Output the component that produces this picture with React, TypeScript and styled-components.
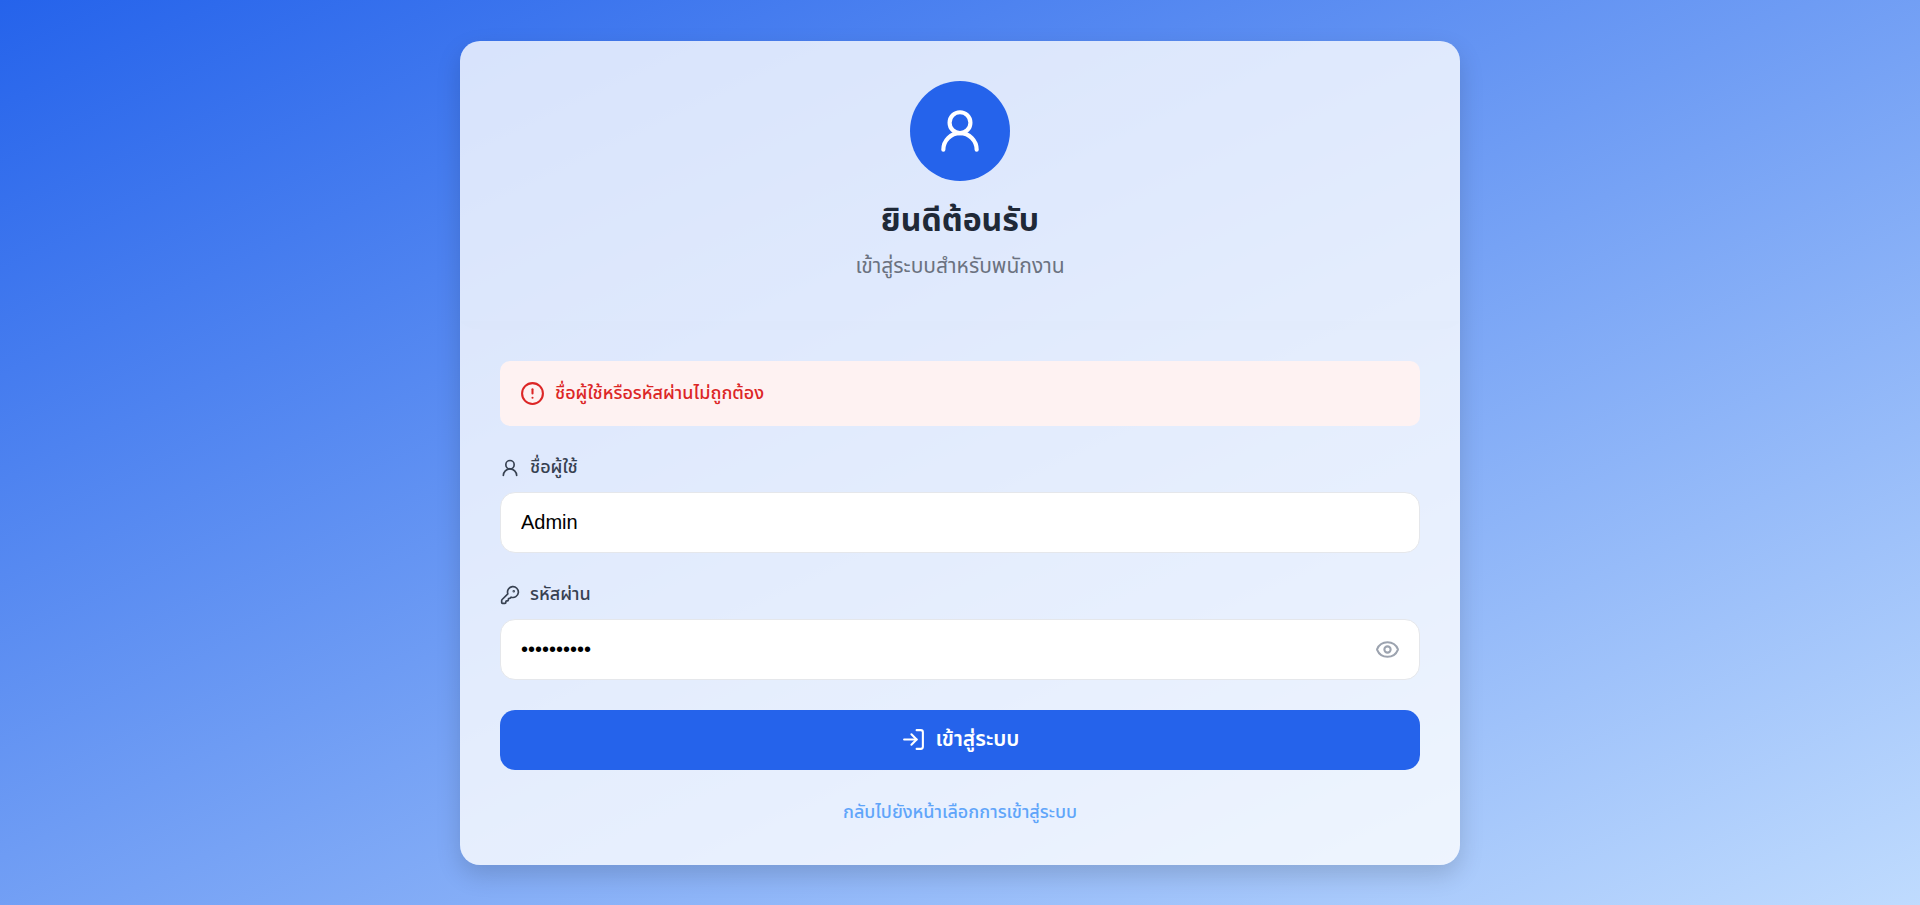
import { useState } from "react";
import styled, { createGlobalStyle } from "styled-components";
import { CircleAlert, Eye, EyeOff, KeyRound, LogIn, UserRound } from "lucide-react";

const GlobalStyle = createGlobalStyle`
  * { box-sizing: border-box; }
  body { margin: 0; }
  body, button, input {
    font-family: Tahoma, "Noto Sans Thai", "Noto Sans", sans-serif;
  }
`;

const Page = styled.main`
  min-height: 100vh;
  display: flex;
  align-items: center;
  justify-content: center;
  padding: 40px 20px;
  background: linear-gradient(to bottom right, #2563eb, #bfdbfe);
`;

const Card = styled.section`
  width: 100%;
  max-width: 1000px;
  overflow: hidden;
  border-radius: 20px;
  background: rgba(255, 255, 255, 0.8);
  box-shadow: 0 10px 25px rgba(0, 0, 0, 0.15);
`;

const Header = styled.header`
  display: flex;
  flex-direction: column;
  align-items: center;
  padding: 40px;
  box-shadow: 0 4px 20px rgba(0, 0, 0, 0.01);
`;

const Avatar = styled.div`
  display: flex;
  align-items: center;
  justify-content: center;
  width: 100px;
  height: 100px;
  border-radius: 50%;
  background: #2563eb;
  color: #fff;
`;

const Title = styled.h1`
  margin: 16px 0 8px;
  font-size: 32px;
  line-height: 48px;
  font-weight: 700;
  color: #1f2937;
`;

const Subtitle = styled.p`
  margin: 0;
  font-size: 21px;
  line-height: 28px;
  color: #6b7280;
`;

const Form = styled.form`
  display: flex;
  flex-direction: column;
  gap: 25px;
  padding: 40px;
`;

const Alert = styled.div`
  display: flex;
  align-items: center;
  gap: 10px;
  height: 65px;
  padding: 0 20px;
  border-radius: 10px;
  background: #fef2f2;
  color: #dc2626;
  font-size: 18px;
  font-weight: 500;
`;

const Field = styled.div`
  display: flex;
  flex-direction: column;
  gap: 7px;
`;

const Label = styled.label`
  display: flex;
  align-items: center;
  gap: 10px;
  font-size: 18px;
  line-height: 34px;
  font-weight: 500;
  color: #374151;
`;

const InputWrap = styled.div`
  position: relative;
`;

const Input = styled.input<{ $withToggle?: boolean }>`
  display: block;
  width: 100%;
  height: 61px;
  padding: 0 ${(p) => (p.$withToggle ? 60 : 20)}px 0 20px;
  border: 1px solid #e5e7eb;
  border-radius: 15px;
  outline: none;
  background: #fff;
  color: #000;
  font-family: "Liberation Sans", Arial, sans-serif;
  font-size: 20px;
`;

const Toggle = styled.button`
  position: absolute;
  top: 0;
  bottom: 0;
  right: 20px;
  display: flex;
  align-items: center;
  padding: 0;
  border: 0;
  background: none;
  color: #9ca3af;
  cursor: pointer;
`;

const Submit = styled.button`
  display: flex;
  align-items: center;
  justify-content: center;
  gap: 10px;
  height: 60px;
  margin-top: 5px;
  border: 0;
  border-radius: 15px;
  background: #2563eb;
  color: #fff;
  font-size: 21px;
  font-weight: 600;
  cursor: pointer;
`;

const BackLink = styled.a`
  align-self: center;
  margin-top: 5px;
  font-size: 18px;
  line-height: 25px;
  font-weight: 500;
  color: #60a5fa;
  text-decoration: none;
`;

export default function App() {
  const [visible, setVisible] = useState(false);
  return (
    <>
      <GlobalStyle />
      <Page>
        <Card>
          <Header>
            <Avatar><UserRound size={50} /></Avatar>
            <Title>ยินดีต้อนรับ</Title>
            <Subtitle>เข้าสู่ระบบสำหรับพนักงาน</Subtitle>
          </Header>
          <Form onSubmit={(e) => e.preventDefault()}>
            <Alert role="alert">
              <CircleAlert size={25} />
              ชื่อผู้ใช้หรือรหัสผ่านไม่ถูกต้อง
            </Alert>
            <Field>
              <Label htmlFor="username"><UserRound size={20} />ชื่อผู้ใช้</Label>
              <Input id="username" type="text" defaultValue="Admin" />
            </Field>
            <Field>
              <Label htmlFor="password"><KeyRound size={20} />รหัสผ่าน</Label>
              <InputWrap>
                <Input id="password" type={visible ? "text" : "password"} defaultValue="Admin12345" $withToggle />
                <Toggle type="button" aria-label="แสดงรหัสผ่าน" onClick={() => setVisible(!visible)}>
                  {visible ? <EyeOff size={25} /> : <Eye size={25} />}
                </Toggle>
              </InputWrap>
            </Field>
            <Submit type="submit"><LogIn size={25} />เข้าสู่ระบบ</Submit>
            <BackLink href="#">กลับไปยังหน้าเลือกการเข้าสู่ระบบ</BackLink>
          </Form>
        </Card>
      </Page>
    </>
  );
}
